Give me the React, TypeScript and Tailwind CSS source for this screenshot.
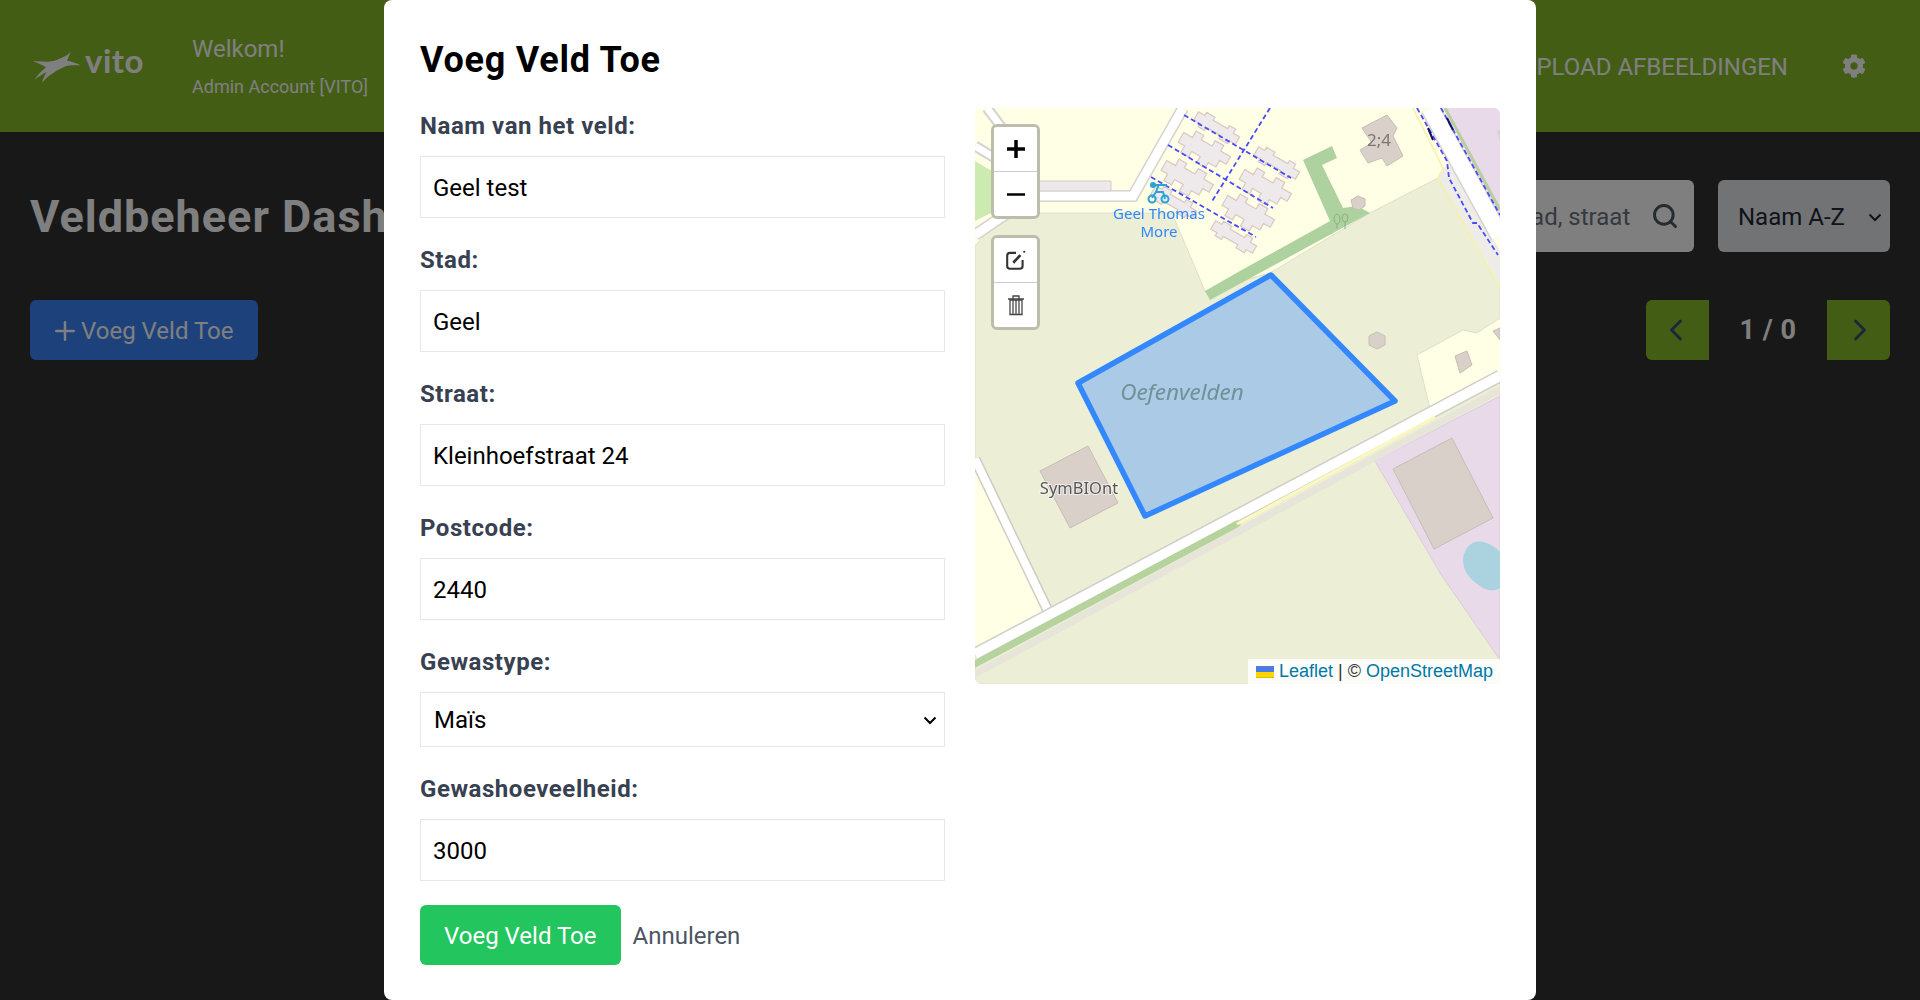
import React from "react";
import { FaCog } from "react-icons/fa";
import { ChevronLeft, ChevronRight, Search, Plus } from "lucide-react";

const thick = "M-21 -4 L-13 -4 L-13 -10 L-6 -10 L-6 -6 L4 -6 L4 -11 L12 -11 L12 -6 L21 -6 L21 1 L15 1 L15 7 L8 7 L8 12 L0 12 L0 6 L-8 6 L-8 11 L-15 11 L-15 5 L-21 5 Z";
const thin = "M-20 -4 L-14 -4 L-14 -7 L-6 -7 L-6 -4 L8 -4 L8 -7 L14 -7 L14 -3 L20 -3 L20 4 L14 4 L14 7 L6 7 L6 4 L-8 4 L-8 7 L-14 7 L-14 4 L-20 4 Z";
const buildings: [number, number, string, number][] = [
  [242, 20, thin, 1.2],
  [229, 42, thick, 1.25],
  [212, 70, thick, 1.25],
  [199, 94, thin, 1.2],
  [302, 55, thin, 1.2],
  [290, 79, thick, 1.25],
  [273, 105, thick, 1.25],
  [259, 129, thin, 1.2],
];

function MapTiles() {
  return (
    <svg viewBox="0 0 525 576" className="block w-full h-full font-['Noto_Sans',sans-serif]">
      <g className="blur-[0.5px]">
        <rect width="525" height="576" fill="#ffffe5" />
        <polygon points="0,138 30,105 197,105 230,183 295,165 395,105 463,70 525,180 525,210 502,225 488,222 442,247 450,280 455,300 482,291 525,268 525,576 0,576 0,540 70,505 0,351" fill="#ecefd5" stroke="#dfe0c6" />
        <polygon points="0,53 15,62 42,52 42,92 0,113" fill="#cdebb0" />
        <polygon points="400,353 525,288 525,552 465,465" fill="#e8dae8" stroke="#dccbdc" />
        <polygon points="468,0 525,0 525,108" fill="#e8dae8" />
        <polygon points="522,23 525,22 525,34" fill="#d9d0c9" />
        <polygon points="478,57 525,143 525,178 463,70 468,60" fill="#eeece6" />
        <path d="M438 0 L468 60 L463 70 L525 180" fill="none" stroke="#f6f1a8" strokeWidth="1.5" />
        <path d="M208 0 L158 88 L60 88 L25 110 L0 127" fill="none" stroke="#d6d2ce" strokeWidth="12" />
        <path d="M208 0 L158 88 L60 88 L25 110 L0 127" fill="none" stroke="#fff" strokeWidth="9" />
        <path d="M12 0 L36 32 M0 38 L40 62" fill="none" stroke="#d6d2ce" strokeWidth="11" />
        <path d="M12 0 L36 32 M0 38 L40 62" fill="none" stroke="#fff" strokeWidth="7" />
        <polygon points="60,73 136,73 136,83 60,83" fill="#ebe9e9" stroke="#dcc9c6" />
        <path d="M0 351 L74 505" fill="none" stroke="#cfccc4" strokeWidth="11" />
        <path d="M0 351 L74 505" fill="none" stroke="#fff" strokeWidth="8" />
        <path d="M0 566 L525 282" fill="none" stroke="#e7e5d9" strokeWidth="7" />
        <path d="M0 546 L525 268" fill="none" stroke="#d0cec8" strokeWidth="13" />
        <path d="M0 546 L525 268" fill="none" stroke="#fff" strokeWidth="10" />
        <path d="M0 556 L262 416" fill="none" stroke="#b6d39e" strokeWidth="7" strokeLinecap="round" />
        <path d="M262 416 L460 309" fill="none" stroke="#fbf8bf" strokeWidth="3" />
        <path d="M455 0 L525 128" fill="none" stroke="#d6d3cf" strokeWidth="20" />
        <path d="M455 0 L525 128" fill="none" stroke="#fff" strokeWidth="17" />
        <path d="M470 0 L525 102" fill="none" stroke="#b9cf9f" strokeWidth="3" />
        <polygon points="328,52 357,38 362,50 347,57 368,100 382,98 395,105 235,192 230,183 265,163 355,113" fill="#aed1a0" />
        {buildings.map(([x, y, d, s], i) => (
          <path key={i} d={d} transform={`translate(${x} ${y}) rotate(30) scale(${s})`} fill="#eeeaec" stroke="#d9c8c4" />
        ))}
        <polygon points="387,20 412,7 422,20 418,28 428,48 412,58 407,50 393,55 385,42 397,35" fill="#d9d0c9" stroke="#c8bdb5" />
        <polygon points="376,92 383,88 390,91 390,98 384,102 378,100" fill="#d9d0c9" stroke="#c8bdb5" />
        <polygon points="394,228 402,224 410,228 410,237 402,241 394,237" fill="#d9d0c9" stroke="#c8bdb5" />
        <polygon points="480,248 492,243 497,257 485,265 482,255" fill="#d9d0c9" stroke="#c8bdb5" />
        <polygon points="518,223 525,220 525,232" fill="#d9d0c9" stroke="#c8bdb5" />
        <polygon points="65,363 113,338 143,395 95,420" fill="#d9d0c9" stroke="#c8bdb5" />
        <polygon points="418,361 477,330 518,410 459,441" fill="#d8d0c9" stroke="#c8bdb5" />
        <path d="M488 451 C490 438 498 432 508 434 C516 436 521 440 525 444 L525 480 C520 484 512 483 505 478 C495 471 488 464 488 451 Z" fill="#aad3df" />
        <g fill="none" stroke="#4a4aff" strokeWidth="1.8" strokeDasharray="5 3">
          <path d="M209 7 L316 70" />
          <path d="M193 37 L298 100" />
          <path d="M176 69 L281 129" />
          <path d="M295 0 L236 95" />
          <path d="M442 0 L472 53 L474 70 L498 115 L502 115 L523 147" />
          <path d="M466 0 L525 107" />
        </g>
        <path d="M453 20 L458 32 M472 10 L478 22" fill="none" stroke="#10106e" strokeWidth="2" />
        <g fill="none" stroke="#8fae86" strokeWidth="1">
          <ellipse cx="362" cy="111" rx="3" ry="5" />
          <ellipse cx="370" cy="110" rx="3" ry="4" />
          <path d="M362 116 V121 M370 114 V121" />
        </g>
        <g fill="none" stroke="#2aa3d6" strokeWidth="2">
          <circle cx="177" cy="91" r="3.5" />
          <circle cx="190" cy="91" r="3.5" />
          <path d="M177 90 L181 84 H188 L190 91 M181 84 L184 76" />
          <path d="M178 77 H192" />
          <circle cx="178" cy="77" r="2" fill="#2aa3d6" />
        </g>
        <text x="184" y="111" textAnchor="middle" fontSize="15" fill="#2f86ff">Geel Thomas</text>
        <text x="184" y="129" textAnchor="middle" fontSize="15" fill="#2f86ff">More</text>
        <text x="404" y="38" textAnchor="middle" fontSize="17" fill="#7c7672">2;4</text>
        <text x="104" y="386" textAnchor="middle" fontSize="16.5" fill="#555" stroke="#ffffff99" strokeWidth="2" className="[paint-order:stroke]">SymBIOnt</text>
      </g>
      <polygon points="296,167 420,293 170,408 103,275" fill="#abcae6" stroke="#3388ff" strokeWidth="5.5" strokeLinejoin="round" />
      <text x="207" y="292" textAnchor="middle" fontSize="22.5" fontStyle="italic" fill="#6f9197" className="blur-[0.4px]">Oefenvelden</text>
    </svg>
  );
}

function Field({ label, value }: { label: string; value: string }) {
  return (
    <div className="mb-6">
      <label className="block mb-3 pt-px text-2xl leading-[35px] tracking-[0.55px] font-bold text-[#374151]">{label}</label>
      <input readOnly value={value} className="block w-full h-[62px] px-3 pt-px border border-[#e5e7eb] text-2xl text-black bg-white outline-none" />
    </div>
  );
}

function SelectChevron({ className }: { className: string }) {
  return (
    <svg width="14" height="9" viewBox="0 0 14 9" fill="none" stroke="currentColor" strokeWidth="2" className={className}>
      <path d="M1.5 1.5 L7 7 L12.5 1.5" />
    </svg>
  );
}

export default function App() {
  return (
    <div className="relative h-screen overflow-hidden bg-[#303030] font-['Roboto',sans-serif] text-white">
      <header className="h-[132px] bg-[#86ba2a] flex items-center pl-[33px] pr-[54px]">
        <div className="flex items-center w-[159px] h-[60px]">
          <svg viewBox="0 0 60 60" className="w-[60px] h-[60px] -ml-[13px] shrink-0 overflow-visible">
            <path transform="scale(0.3333)" d="M38 76 C70 76 90 80 108 73 C125 66 140 60 152 48 C147 60 144 68 141 74 C155 76 170 81 182 88 C160 87 140 87 127 95 C105 106 85 118 66 140 C70 127 74 116 80 108 C68 114 56 122 43 132 C53 116 66 104 78 94 C66 86 53 81 38 76 Z" fill="#fff" />
          </svg>
          <span className="font-['Lato',sans-serif] font-bold text-[33px] leading-none tracking-[0.5px] ml-[5px] -mt-[11px]">vito</span>
        </div>
        <div className="flex flex-col">
          <span className="text-2xl leading-9">Welkom!</span>
          <span className="text-lg leading-7 mt-[6px]">Admin Account [VITO]</span>
        </div>
        <div className="ml-auto pt-[2px] text-2xl whitespace-nowrap">UPLOAD AFBEELDINGEN</div>
        <FaCog className="ml-[54px] w-6 h-6" />
      </header>

      <main className="px-[30px] pt-12">
        <div className="flex items-center justify-between h-[72px]">
          <h1 className="text-[45px] font-bold leading-none tracking-[1px] whitespace-nowrap">Veldbeheer Dashboard</h1>
          <div className="flex items-center gap-6">
            <div className="relative w-[370px]">
              <input readOnly placeholder="Zoek op naam, stad, straat" className="w-full h-[72px] pl-[24px] pt-[2px] pr-[60px] rounded-md bg-white text-2xl text-[#111827] placeholder:text-[#6b7280] outline-none" />
              <Search className="absolute right-[15px] top-[22px] w-7 h-7 text-[#4b5563]" strokeWidth={2.5} />
            </div>
            <div className="relative w-[172px]">
              <select className="appearance-none block w-full h-[72px] pl-[20px] pt-[2px] rounded-md bg-[#e5e7eb] text-2xl text-[#1f2937] outline-none">
                <option>Naam A-Z</option>
              </select>
              <SelectChevron className="absolute right-[8px] top-[33px] text-[#1f2937]" />
            </div>
          </div>
        </div>
        <div className="flex items-center justify-between mt-12 h-[60px]">
          <button className="flex items-center h-[60px] w-[228px] pl-5 pt-px rounded-md bg-[#3b82f6] text-2xl">
            <Plus className="w-[30px] h-[30px] mr-[1px]" strokeWidth={2} />
            Voeg Veld Toe
          </button>
          <div className="flex items-center">
            <button className="flex items-center justify-center w-[63px] h-[60px] pr-[3px] rounded-l-md bg-[#86ba2a] text-[#3c4f70]"><ChevronLeft className="w-9 h-9" strokeWidth={2} /></button>
            <span className="w-[118px] pt-px text-center text-[27px] font-bold tracking-[0.5px]">1 / 0</span>
            <button className="flex items-center justify-center w-[63px] h-[60px] pl-[3px] rounded-r-md bg-[#86ba2a] text-[#3c4f70]"><ChevronRight className="w-9 h-9" strokeWidth={2} /></button>
          </div>
        </div>
      </main>

      <div className="fixed inset-0 bg-black/50 flex justify-center">
        <div className="w-[1152px] h-[1000px] bg-white rounded-lg p-9 text-black">
          <h2 className="text-4xl font-bold pt-px leading-[47px] tracking-[0.75px] mb-6">Voeg Veld Toe</h2>
          <div className="grid grid-cols-2 gap-[30px]">
            <div>
              <Field label="Naam van het veld:" value="Geel test" />
              <Field label="Stad:" value="Geel" />
              <Field label="Straat:" value="Kleinhoefstraat 24" />
              <Field label="Postcode:" value="2440" />
              <div className="mb-6">
                <label className="block mb-3 pt-px text-2xl leading-[35px] tracking-[0.55px] font-bold text-[#374151]">Gewastype:</label>
                <div className="relative">
                  <select className="appearance-none block w-full h-[55px] pl-[13px] border border-[#e5e7eb] text-2xl text-black bg-white outline-none">
                    <option>Maïs</option>
                  </select>
                  <SelectChevron className="absolute right-[8px] top-[24px] text-black" />
                </div>
              </div>
              <Field label="Gewashoeveelheid:" value="3000" />
              <div className="flex items-center gap-3">
                <button className="h-[60px] px-6 pt-px rounded-md bg-[#22c55e] text-white text-2xl">Voeg Veld Toe</button>
                <button className="pt-px text-2xl text-[#4b5563]">Annuleren</button>
              </div>
            </div>
            <div className="relative h-[576px] rounded-md overflow-hidden">
              <MapTiles />
              <div className="absolute left-4 top-4 w-[49px] rounded-md border-[3px] border-[#bcbdaa] overflow-hidden">
                <div className="h-[45px] bg-white border-b border-[#ccc] flex items-center justify-center">
                  <svg width="20" height="20" viewBox="0 0 20 20"><path d="M10 1 V19 M1 10 H19" stroke="#000" strokeWidth="3.5" /></svg>
                </div>
                <div className="h-[44px] bg-white flex items-center justify-center">
                  <svg width="20" height="20" viewBox="0 0 20 20"><path d="M1 10.5 H19" stroke="#000" strokeWidth="2.6" /></svg>
                </div>
              </div>
              <div className="absolute left-4 top-[127px] w-[49px] rounded-md border-[3px] border-[#bcbdaa] overflow-hidden">
                <div className="h-[45px] bg-white border-b border-[#ccc] flex items-center justify-center">
                  <svg width="22" height="22" viewBox="0 0 20 20" fill="none" stroke="#333" strokeWidth="1.9">
                    <path d="M10 3.5 H4.5 A2.5 2.5 0 0 0 2 6 V15.5 A2.5 2.5 0 0 0 4.5 18 H13.5 A2.5 2.5 0 0 0 16 15.5 V10" />
                    <path d="M7.5 12.5 L14 5.5" strokeWidth="2.4" />
                    <circle cx="17.5" cy="2.5" r="1" fill="#333" stroke="none" />
                  </svg>
                </div>
                <div className="h-[44px] bg-white flex items-center justify-center">
                  <svg width="20" height="22" viewBox="0 0 20 22" fill="none" stroke="#444" strokeWidth="1.3">
                    <path d="M2 5 H18 M7 5 V2 H13 V5" />
                    <path d="M4 6 H16 V20.5 H4 Z M7 6 V20.5 M10 6 V20.5 M13 6 V20.5" />
                  </svg>
                </div>
              </div>
              <div className="absolute right-0 bottom-0 h-[25px] w-[252px] pl-2 flex items-center bg-white/85 font-['Liberation_Sans',sans-serif] text-[18px] text-[#333] whitespace-nowrap">
                <svg width="18" height="12" viewBox="0 0 18 12" className="mr-[5px]">
                  <rect width="18" height="6" fill="#4c7be1" />
                  <rect y="6" width="18" height="5" fill="#ffd500" />
                  <rect y="11" width="18" height="1" fill="#e0bc00" />
                </svg>
                <span className="text-[#0078a8]">Leaflet</span>
                <span className="mx-[5px]">|</span>
                <span>©</span>
                <span className="ml-[5px] text-[#0078a8]">OpenStreetMap</span>
              </div>
            </div>
          </div>
        </div>
      </div>
    </div>
  );
}
